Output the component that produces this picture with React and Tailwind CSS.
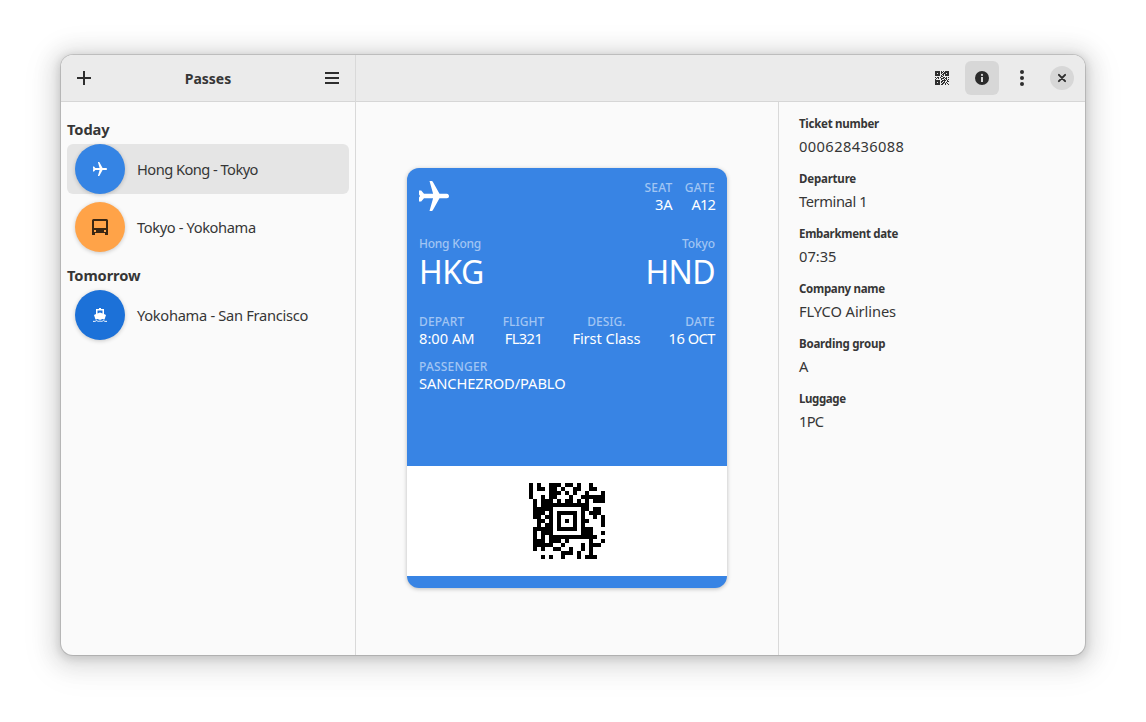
const AZTEC = [
  "X.X..XXX.XX.X..X...",
  "X.XX.XX.X..XX..XX..",
  "X....XXX.X.X..X...X",
  "X..X.XX...X..XXXXXX",
  ".X.XXX.X.XX.X.X.XXX",
  ".X.XXXXXXXXXXXX....",
  ".XXXXX.......XX.XX.",
  ".XXX.X.XXXXX.X.XXX.",
  ".XX.XX.X...X.X..X.X",
  "..XX.X.X.X.X.XX...X",
  "..X.XX.X...X.X....X",
  ".XXXXX.XXXXX.XXX...",
  ".X.XXX.......XXX..X",
  ".X.X.XXXXXXXXXXXX..",
  ".XXX.XXX.X.....X..X",
  ".XXXXX..X....X.XXX.",
  ".X.X..XX..X..X.X...",
  "........XXX.X..X...",
  "...X.X..X...X.XXX..",
];

const QR_ICON = [
  "XXXXX.X.X.XXXX",
  "XXXXX.XX.XXXXX",
  "XX.XX.X.XXX.XX",
  "XXXXX..XX.XXXX",
  "XXXXX.X.X.XXXX",
  "......XX......",
  "X.XX.X..XX.X.X",
  ".X.X..XXX.XX..",
  "X.....X..X.X.X",
  "XXXXX..XXXX.X.",
  "XXXXX.XX.X..XX",
  "XX.XX.X.XX.X..",
  "XXXXX..XX.X.X.",
  "XXXXX.XX..X..X",
];

function Modules({ rows, className, fill }) {
  return (
    <svg viewBox={`0 0 ${rows[0].length} ${rows.length}`} className={className} fill={fill} shapeRendering="crispEdges">
      {rows.flatMap((row, y) =>
        [...row].map((c, x) => (c === "X" ? <rect key={`${x}-${y}`} x={x} y={y} width="1" height="1" /> : null))
      )}
    </svg>
  );
}

function Plane({ className }) {
  return (
    <svg viewBox="0 0 30 30" className={className} fill="#fff">
      <path d="M10.5 0h2.200c.5 0 .8.3 1.100.8L20.500 12.700h7.300c1.300 0 2.200 1 2.200 2.300s-.9 2.300-2.200 2.300h-7.300L13.800 29.200c-.3.5-.6.8-1.100.8h-2.200l3.600-12.700H5L2.200 20.600H0V16.500L1 15 0 13.500V9.400h2.200L5 12.700h9.100z" />
    </svg>
  );
}

function Bus() {
  return (
    <svg viewBox="0 0 16 16" className="size-4" fill="#3a2713">
      <path fillRule="evenodd" d="M1.500 0h13A1.500 1.500 0 0 1 16 1.500V16h-3v-2H3v2H0V1.500A1.500 1.500 0 0 1 1.500 0zM2 2v7h12V2zm0 9v2h2v-2zm10 0v2h2v-2z" />
    </svg>
  );
}

function Ship() {
  return (
    <svg viewBox="0 0 14 14" className="size-3.5" fill="#fff">
      <path fillRule="evenodd" d="M6 0h2v1h3v5l2 1-1.500 4.500c-1.200 0-1.500-.6-2.200-.6-.9 0-1.200.9-2.300.9s-1.400-.9-2.300-.9c-.7 0-1 .6-2.200.6L1 7l2-1V1h3zM4.500 2.500v3L7 4.500l2.500 1v-3z" />
      <path d="M0 13.300c1.500.3 2.500 0 3.700-.8 1.100 1 2.200 1 3.300.5 1.100.5 2.200.5 3.300-.5 1.200.8 2.200 1.100 3.700.8" fill="none" stroke="#fff" />
    </svg>
  );
}

function PassRow({ icon, color, label, tracking, selected }) {
  return (
    <div className={`flex h-[50px] items-center gap-3 rounded-md pl-2 ${selected ? "bg-[#e5e5e5]" : ""}`}>
      <div className={`flex size-[50px] items-center justify-center rounded-full shadow-[0_1px_4px_rgba(0,0,0,0.2)] ${color}`}>{icon}</div>
      <span className={`pb-px ${tracking}`}>{label}</span>
    </div>
  );
}

function Field({ label, value, align = "items-start", labelTracking = "tracking-[0.2px]", valueTracking = "" }) {
  return (
    <div className={`flex flex-col ${align}`}>
      <span className={`text-[12px] leading-[17px] font-medium text-[#a1c5f3] ${labelTracking}`}>{label}</span>
      <span className={`leading-[17px] text-white ${valueTracking}`}>{value}</span>
    </div>
  );
}

const DETAILS = [
  ["Ticket number", "000628436088", "tracking-[-0.27px]", "tracking-[0.4px]"],
  ["Departure", "Terminal 1", "tracking-[-0.2px]", "tracking-[-0.4px]"],
  ["Embarkment date", "07:35", "tracking-[-0.3px]", ""],
  ["Company name", "FLYCO Airlines", "tracking-[-0.3px]", "tracking-[-0.08px]"],
  ["Boarding group", "A", "tracking-[-0.2px]", ""],
  ["Luggage", "1PC", "tracking-[-0.4px]", "tracking-[-0.7px]"],
];

export default function App() {
  return (
    <div className="flex h-[722px] w-[1146px] bg-white pl-[61px] pt-[55px] font-['Noto_Sans',sans-serif] text-[14.67px] leading-5 whitespace-nowrap text-[#363636]">
      <div className="flex h-[600px] w-[1024px] overflow-hidden rounded-xl bg-[#fafafa] shadow-[0_0_0_1px_rgba(0,0,0,0.13),0_2px_8px_2px_rgba(0,0,0,0.13),0_3px_20px_10px_rgba(0,0,0,0.09),0_6px_32px_16px_rgba(0,0,0,0.04)]">
        <aside className="flex w-[295px] flex-col border-r border-[#d9d9d9]">
          <header className="flex h-[47px] items-center justify-between border-b border-[#d6d6d6] bg-[#ebebeb] px-4">
            <svg viewBox="0 0 14 14" className="size-3.5" fill="#2e2e2e"><path d="M6 0h2v6h6v2H8v6H6V8H0V6h6z" /></svg>
            <h1 className="pt-0.5 text-[14px] font-bold">Passes</h1>
            <svg viewBox="0 0 14 12" className="h-3 w-3.5" fill="#2e2e2e"><path d="M0 0h14v2H0zM0 5h14v2H0zM0 10h14v2H0z" /></svg>
          </header>
          <div className="flex flex-col px-1.5 pt-[17px]">
            <h2 className="mb-[5px] font-bold tracking-[-0.1px]">Today</h2>
            <PassRow selected color="bg-[#3584e4]" icon={<Plane className="size-3.5" />} label="Hong Kong - Tokyo" tracking="tracking-[-0.54px]" />
            <div className="h-2" />
            <PassRow color="bg-[#ffa348]" icon={<Bus />} label="Tokyo - Yokohama" tracking="tracking-[-0.38px]" />
            <h2 className="mt-[13px] mb-[5px] font-bold tracking-[-0.1px]">Tomorrow</h2>
            <PassRow color="bg-[#1c71d8]" icon={<Ship />} label="Yokohama - San Francisco" tracking="tracking-[-0.3px]" />
          </div>
        </aside>
        <div className="flex flex-1 flex-col">
          <header className="flex h-[47px] items-center justify-end border-b border-[#d6d6d6] bg-[#ebebeb] pr-[11px]">
            <Modules rows={QR_ICON} className="mr-4 size-3.5" fill="#2e2e2e" />
            <div className="mr-[15px] flex size-[34px] items-center justify-center rounded-md bg-[#d7d7d7]">
              <svg viewBox="0 0 14 14" className="size-3.5"><circle cx="7" cy="7" r="7" fill="#2b2b2b" /><circle cx="7" cy="3.900" r="1.100" fill="#d7d7d7" /><path d="M6 6h2v5H6z" fill="#d7d7d7" /></svg>
            </div>
            <svg viewBox="0 0 16 16" className="mr-5 size-4" fill="#2e2e2e"><circle cx="8" cy="2" r="2" /><circle cx="8" cy="8" r="2" /><circle cx="8" cy="14" r="2" /></svg>
            <div className="flex size-6 items-center justify-center rounded-full bg-[#d7d7d7]">
              <svg viewBox="0 0 10 10" className="size-2.5"><path d="M1.900 1.900 8.100 8.100M8.100 1.900 1.900 8.100" stroke="#2e2e2e" strokeWidth="2" strokeLinecap="round" /></svg>
            </div>
          </header>
          <div className="flex flex-1">
            <main className="flex flex-1 justify-center pt-[66px]">
              <article className="flex h-[420px] w-80 flex-col overflow-hidden rounded-xl bg-[#3884e4] shadow-[0_1px_4px_rgba(0,0,0,0.25)]">
                <div className="flex h-[298px] flex-col px-3 pt-[11px]">
                  <div className="flex h-[56px] justify-between">
                    <Plane className="mt-[2px] size-[30px]" />
                    <div className="flex gap-3">
                      <Field label="SEAT" value="3A" align="items-end" labelTracking="tracking-[0.3px]" />
                      <Field label="GATE" value="A12" align="items-end" labelTracking="tracking-[0.3px]" valueTracking="tracking-[-0.9px]" />
                    </div>
                  </div>
                  <div className="flex h-[78px] justify-between">
                    <div className="flex flex-col">
                      <span className="text-[12px] leading-[17px] font-medium tracking-[-0.25px] text-[#a1c5f3]">Hong Kong</span>
                      <span className="text-[32px] leading-[39px] tracking-[-0.4px] text-white">HKG</span>
                    </div>
                    <div className="flex flex-col items-end">
                      <span className="text-[12px] leading-[17px] font-medium tracking-[-0.1px] text-[#a1c5f3]">Tokyo</span>
                      <span className="text-[32px] leading-[39px] tracking-[-0.6px] text-white">HND</span>
                    </div>
                  </div>
                  <div className="flex h-[45px] justify-between">
                    <Field label="DEPART" value="8:00 AM" />
                    <Field label="FLIGHT" value="FL321" align="items-center" labelTracking="" valueTracking="tracking-[-0.6px]" />
                    <Field label="DESIG." value="First Class" align="items-center" labelTracking="" valueTracking="tracking-[-0.08px]" />
                    <Field label="DATE" value="16 OCT" align="items-end" valueTracking="tracking-[-0.5px]" />
                  </div>
                  <Field label="PASSENGER" value="SANCHEZROD/PABLO" valueTracking="tracking-[-0.08px]" />
                </div>
                <div className="flex h-[110px] items-center justify-center bg-white">
                  <Modules rows={AZTEC} className="size-[76px]" fill="#000" />
                </div>
              </article>
            </main>
            <section className="flex w-[307px] flex-col gap-[15px] border-l border-[#d9d9d9] pt-[12px] pl-5">
              {DETAILS.map(([label, value, labelTracking, valueTracking]) => (
                <div key={label} className="flex h-10 flex-col">
                  <span className={`text-[11.5px] leading-5 font-bold ${labelTracking}`}>{label}</span>
                  <span className={`pt-[2px] leading-5 ${valueTracking}`}>{value}</span>
                </div>
              ))}
            </section>
          </div>
        </div>
      </div>
    </div>
  );
}
